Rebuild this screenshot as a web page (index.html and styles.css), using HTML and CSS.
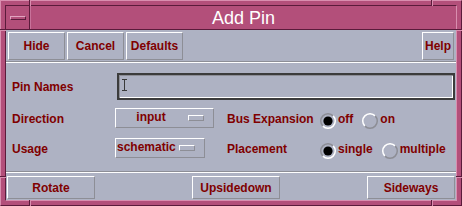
FILE: index.html
```html
<!DOCTYPE html>
<html>
<head>
<meta charset="utf-8">
<link rel="stylesheet" href="styles.css">
</head>
<body>
<div class="window">
  <span class="notch nv ntl"></span>
  <span class="notch nv ntr"></span>
  <span class="notch nv nbl"></span>
  <span class="notch nv nbr"></span>
  <span class="notch nh nlt"></span>
  <span class="notch nh nlb"></span>
  <span class="notch nh nrt"></span>
  <span class="notch nh nrb"></span>
  <div class="client">
    <div class="titlebar">
      <div class="menu-btn"><span class="menu-bar"></span></div>
      <div class="title">Add Pin</div>
    </div>
    <div class="content">
      <div class="top-buttons">
        <div class="btn btn-top">Hide</div>
        <div class="btn btn-top">Cancel</div>
        <div class="btn btn-top">Defaults</div>
        <div class="btn btn-top btn-help">Help</div>
      </div>
      <div class="sep"></div>
      <div class="row-pin">
        <span class="label col-pin">Pin Names</span>
        <div class="field">
          <svg class="ibeam" width="5" height="12" viewBox="0 0 5 12"><path d="M0 0.5H5M0 11.5H5M2.5 0V12" stroke="#3a3a3a" stroke-width="1" fill="none"/></svg>
        </div>
      </div>
      <div class="row row-dir">
        <span class="label col1">Direction</span>
        <div class="col2"><div class="option option-wide"><span class="opt-text">input</span><span class="indicator"></span></div></div>
        <span class="label col3">Bus Expansion</span>
        <div class="radios">
          <div class="radio-item">
            <svg class="radio" width="16" height="16" viewBox="0 0 16 16"><path d="M2.87 13.13A7.25 7.25 0 0 1 13.13 2.87" stroke="#8d8e96" stroke-width="1.5" fill="none"/><path d="M13.13 2.87A7.25 7.25 0 0 1 2.87 13.13" stroke="#ffffff" stroke-width="1.5" fill="none"/><circle cx="8" cy="8" r="4.6" fill="#000"/></svg>
            <span class="radio-text">off</span>
          </div>
          <div class="radio-item">
            <svg class="radio" width="16" height="16" viewBox="0 0 16 16"><path d="M2.87 13.13A7.25 7.25 0 0 1 13.13 2.87" stroke="#ffffff" stroke-width="1.5" fill="none"/><path d="M13.13 2.87A7.25 7.25 0 0 1 2.87 13.13" stroke="#8d8e96" stroke-width="1.5" fill="none"/></svg>
            <span class="radio-text">on</span>
          </div>
        </div>
      </div>
      <div class="row row-usage">
        <span class="label col1">Usage</span>
        <div class="col2"><div class="option"><span class="opt-text">schematic</span><span class="indicator"></span></div></div>
        <span class="label col3">Placement</span>
        <div class="radios">
          <div class="radio-item">
            <svg class="radio" width="16" height="16" viewBox="0 0 16 16"><path d="M2.87 13.13A7.25 7.25 0 0 1 13.13 2.87" stroke="#8d8e96" stroke-width="1.5" fill="none"/><path d="M13.13 2.87A7.25 7.25 0 0 1 2.87 13.13" stroke="#ffffff" stroke-width="1.5" fill="none"/><circle cx="8" cy="8" r="4.6" fill="#000"/></svg>
            <span class="radio-text">single</span>
          </div>
          <div class="radio-item">
            <svg class="radio" width="16" height="16" viewBox="0 0 16 16"><path d="M2.87 13.13A7.25 7.25 0 0 1 13.13 2.87" stroke="#ffffff" stroke-width="1.5" fill="none"/><path d="M13.13 2.87A7.25 7.25 0 0 1 2.87 13.13" stroke="#8d8e96" stroke-width="1.5" fill="none"/></svg>
            <span class="radio-text">multiple</span>
          </div>
        </div>
      </div>
      <div class="sep sep-bottom"></div>
      <div class="bottom-buttons">
        <div class="btn btn-bottom">Rotate</div>
        <div class="btn btn-bottom btn-ud">Upsidedown</div>
        <div class="btn btn-bottom btn-side">Sideways</div>
      </div>
    </div>
  </div>
</div>
</body>
</html>
```

FILE: styles.css
```css
* { box-sizing: border-box; }

body {
  margin: 0;
  font-family: "Liberation Sans", Arial, sans-serif;
}

.window {
  position: relative;
  width: 462px;
  height: 206px;
  background: #b34f7a;
  border: 1px solid;
  border-color: #d98eaf #5b1b3b #5b1b3b #d98eaf;
  padding: 4px;
}

.notch { position: absolute; display: block; }
.nv { width: 2px; height: 6px; border-left: 1px solid #5b1b3b; border-right: 1px solid #d98eaf; }
.nh { width: 6px; height: 2px; border-top: 1px solid #5b1b3b; border-bottom: 1px solid #d98eaf; }
.ntl { top: -1px; left: 28px; }
.ntr { top: -1px; left: 430px; }
.nbl { bottom: -1px; left: 28px; }
.nbr { bottom: -1px; left: 430px; }
.nlt { left: -1px; top: 28px; }
.nlb { left: -1px; top: 175px; }
.nrt { right: -1px; top: 28px; }
.nrb { right: -1px; top: 175px; }

.client {
  height: 100%;
  border: 1px solid;
  border-color: #5b1b3b #d98eaf #d98eaf #5b1b3b;
  display: flex;
  flex-direction: column;
}

.titlebar {
  height: 24px;
  display: flex;
  border-bottom: 1px solid #5b1b3b;
  background: #b34f7a;
}

.menu-btn {
  width: 24px;
  border-right: 1px solid #5b1b3b;
  padding: 10px 0 0 4px;
}

.menu-bar {
  display: block;
  width: 16px;
  height: 4px;
  border-top: 1px solid #e2a4c0;
  border-left: 1px solid #e2a4c0;
  border-bottom: 1px solid #5b1b3b;
  border-right: 1px solid #5b1b3b;
  background: #b34f7a;
}

.title {
  flex: 1;
  color: #ffffff;
  font-size: 18px;
  line-height: 21px;
  padding-top: 2px;
  text-align: center;
  border-left: 1px solid #c8729a;
}

.content {
  flex: 1;
  background: #aeb2c3;
  display: flex;
  flex-direction: column;
}

.btn {
  display: flex;
  align-items: center;
  justify-content: center;
  color: #800000;
  font-weight: bold;
  font-size: 12px;
  border: 1px solid;
  border-color: #ffffff #8d8e96 #8d8e96 #ffffff;
}

.top-buttons {
  display: flex;
  gap: 2px;
  padding: 2px 2px 0 2px;
}

.btn-top { width: 57px; height: 28px; }
.btn-help { width: 32px; margin-left: auto; }

.sep {
  height: 2px;
  margin-top: 1px;
  border-top: 1px solid #8d8e96;
  border-bottom: 1px solid #ffffff;
}

.label {
  color: #800000;
  font-weight: bold;
  font-size: 12px;
  line-height: 14px;
  white-space: nowrap;
}

.row-pin {
  display: flex;
  align-items: center;
  margin-top: 10px;
  padding-left: 6px;
}

.col-pin { width: 105px; }

.field {
  width: 338px;
  height: 27px;
  border: 2px solid #3c3c3c;
  box-shadow: inset 1px 1px 0 #8d8e96, inset -1px -1px 0 #ffffff;
  padding: 4px 0 0 3px;
  display: flex;
  align-items: flex-start;
}

.ibeam { display: block; }

.row {
  display: flex;
  align-items: flex-start;
  height: 20px;
  padding-left: 6px;
}

.row-dir { margin-top: 7px; }
.row-usage { margin-top: 10px; }

.col1 { width: 103px; margin-top: 5px; }
.col2 { width: 112px; }
.col3 { width: 93px; margin-top: 5px; }

.option {
  display: inline-flex;
  align-items: center;
  height: 20px;
  border: 1px solid;
  border-color: #ffffff #8d8e96 #8d8e96 #ffffff;
  padding: 0 9px 0 1px;
}

.option-wide { width: 99px; }

.opt-text {
  color: #800000;
  font-weight: bold;
  font-size: 12px;
  line-height: 14px;
  padding-right: 3px;
  margin-top: -1px;
}

.option-wide .opt-text { flex: 1; text-align: center; }

.indicator {
  display: block;
  width: 16px;
  height: 6px;
  border: 1px solid;
  border-color: #ffffff #8d8e96 #8d8e96 #ffffff;
}

.radios {
  display: flex;
  gap: 9px;
  margin-top: 5px;
}

.radio-item {
  display: flex;
  align-items: flex-start;
  gap: 2px;
}

.radio { display: block; margin-top: 1px; }

.radio-text {
  color: #800000;
  font-weight: bold;
  font-size: 12px;
  line-height: 14px;
}

.sep-bottom { margin-top: 14px; }

.bottom-buttons {
  display: flex;
  padding: 3px 1px 0 1px;
}

.btn-bottom { width: 88px; height: 23px; }
.btn-ud { margin-left: 97px; }
.btn-side { margin-left: auto; }
```
